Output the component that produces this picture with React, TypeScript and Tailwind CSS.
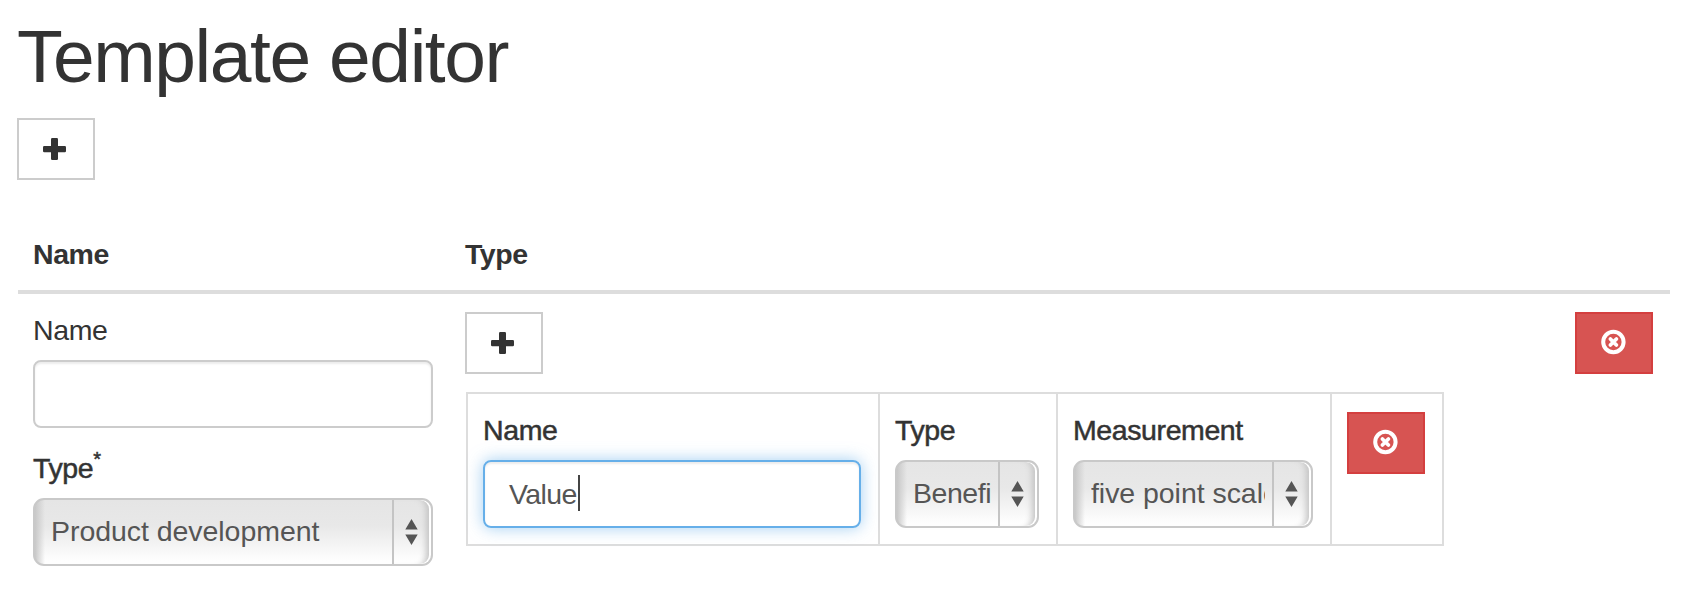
import React from "react";

function AddButton() {
  return (
    <button className="flex h-[62px] w-[78px] items-center justify-center border-2 border-[#ccc] bg-white pr-[4px]">
      <svg width="24" height="24" viewBox="0 0 24 24" fill="#333">
        <rect x="9" y="1" width="7" height="22" rx="1.2" />
        <rect x="1" y="9" width="23" height="6.3" rx="1.2" />
      </svg>
    </button>
  );
}

function RemoveButton() {
  return (
    <button className="flex h-[62px] w-[78px] shrink-0 items-center justify-center border-2 border-[#d43f3f] bg-[#d75452] pr-[2px] pb-[2px]">
      <svg width="26" height="26" viewBox="0 0 26 26" fill="none" stroke="#fff">
        <circle cx="13.4" cy="13" r="10.2" strokeWidth="4" />
        <path d="M10.4 10l6 6M16.4 10l-6 6" strokeWidth="3.8" strokeLinecap="round" />
      </svg>
    </button>
  );
}

function Label({ children, strong = false }: { children: React.ReactNode; strong?: boolean }) {
  return (
    <div
      className={`mb-[10px] h-10 whitespace-nowrap text-[28.5px] leading-10 ${
        strong ? "tracking-[-0.4px] [-webkit-text-stroke:0.5px_#333]" : "tracking-[-0.4px]"
      }`}
    >
      {children}
    </div>
  );
}

function Select({ value, className }: { value: string; className: string }) {
  return (
    <div
      className={`flex h-[68px] overflow-hidden rounded-[11px] border-2 border-[#c9c9c9] bg-[linear-gradient(90deg,#c8c8c8_0px,rgba(200,200,200,0)_10px),linear-gradient(180deg,#e5e5e5_0%,#e8e8e8_40%,#fefefe_95%)] text-[#555] ${className}`}
    >
      <div className="min-w-0 flex-1 pl-4 pr-[7px]">
        <div className="overflow-hidden whitespace-nowrap pt-[11px] text-[28.5px] leading-10">{value}</div>
      </div>
      <div className="flex w-[39px] shrink-0 items-center justify-center rounded-r-[9px] border-l-2 border-[#c4c4c4] pr-[3px] shadow-[inset_-2px_0_0_#fff,inset_-10px_0_6px_-5px_#c4c4c4]">
        <svg width="13" height="26" viewBox="0 0 13 26" fill="#555">
          <path d="M6.5 0L12.7 10.5H.3zM6.5 26L12.7 15.5H.3z" />
        </svg>
      </div>
    </div>
  );
}

export default function App() {
  return (
    <div className="h-[602px] w-[1698px] overflow-hidden bg-white pl-[17px] pt-[17px] font-['Liberation_Sans',Arial,sans-serif] text-[#333]">
      <h1 className="mb-[22px] h-[79px] text-[75px] leading-[79px] tracking-[-1.45px]">Template editor</h1>
      <AddButton />
      <div className="ml-px mt-[54px] w-[1652px]">
        <div className="flex border-b-4 border-[#ddd] pb-4 pl-[15px] text-[28.5px] font-bold leading-10 tracking-[-0.45px]">
          <div className="w-[432px]">Name</div>
          <div>Type</div>
        </div>
        <div className="flex pl-[15px] pr-[17px] pt-4">
          <div className="mr-8 w-[400px] shrink-0">
            <Label>Name</Label>
            <div className="mb-5 h-[68px] rounded-[8px] border-2 border-[#ccc] shadow-[inset_0_2px_2px_rgba(0,0,0,0.075)]" />
            <Label strong>
              Type<sup className="relative -top-[12px] align-baseline text-[20px] leading-none">*</sup>
            </Label>
            <Select value="Product development" className="w-[400px] tracking-[-0.05px]" />
          </div>
          <div className="pt-[2px]">
            <AddButton />
            <div className="ml-px mt-[18px] flex h-[154px] w-[978px] divide-x-2 divide-[#ddd] border-2 border-[#ddd]">
              <div className="w-[412px] shrink-0 pl-[15px] pt-4">
                <Label strong>Name</Label>
                <div className="flex h-[68px] w-[378px] items-center rounded-[8px] border-2 border-[#66afe9] pl-6 text-[28.5px] tracking-[-0.6px] text-[#555] shadow-[inset_0_2px_2px_rgba(0,0,0,0.075),0_0_16px_rgba(102,175,233,0.6)]">
                  Value
                  <span className="mb-[3px] ml-px h-9 w-[2px] bg-[#444]" />
                </div>
              </div>
              <div className="w-[178px] shrink-0 pl-[15px] pt-4">
                <Label strong>Type</Label>
                <Select value="Benefi" className="w-[144px] tracking-[-0.45px]" />
              </div>
              <div className="w-[274px] shrink-0 pl-[15px] pt-4">
                <Label strong>Measurement</Label>
                <Select value="five point scale" className="w-[240px] tracking-[-0.05px]" />
              </div>
              <div className="pl-[15px] pt-[18px]">
                <RemoveButton />
              </div>
            </div>
          </div>
          <div className="ml-auto pt-[2px]">
            <RemoveButton />
          </div>
        </div>
      </div>
    </div>
  );
}
